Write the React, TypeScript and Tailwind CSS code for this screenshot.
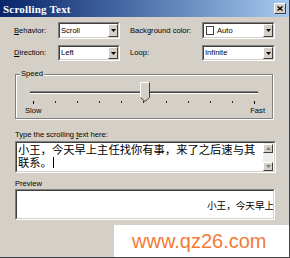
import type { ReactNode } from "react";

const raised =
  "border border-t-white border-l-white border-r-[#404040] border-b-[#404040] bg-[#d4d0c8]";
const sunkenOuter =
  "border border-t-[#808080] border-l-[#808080] border-r-white border-b-white";
const sunkenInner =
  "border border-t-[#404040] border-l-[#404040] border-r-[#d4d0c8] border-b-[#d4d0c8] bg-white";

function Arrow() {
  return (
    <div className={`w-[10px] h-full flex items-center justify-center ${raised}`}>
      <svg width="5" height="3" viewBox="0 0 5 3">
        <path d="M0 0H5L2.5 3Z" fill="#000" />
      </svg>
    </div>
  );
}

function Select({ className, children }: { className: string; children: ReactNode }) {
  return (
    <div className={`${className} ${sunkenOuter}`}>
      <div className={`h-full flex items-stretch ${sunkenInner}`}>
        <div className="flex-1 flex items-center pl-[1px] text-[7.6px] leading-[10px] overflow-hidden whitespace-nowrap">
          {children}
        </div>
        <Arrow />
      </div>
    </div>
  );
}

function ScrollButton({ up }: { up?: boolean }) {
  return (
    <div className={`w-[10px] h-[9px] flex items-center justify-center ${raised}`}>
      <svg width="5" height="3" viewBox="0 0 5 3">
        <path d={up ? "M0 3H5L2.5 0Z" : "M0 0H5L2.5 3Z"} fill="#808080" />
      </svg>
    </div>
  );
}

const ticks = Array.from({ length: 11 }, (_, i) => i);

export default function App() {
  return (
    <div className="w-[290px] h-[258px] bg-[#d4d0c8] relative overflow-hidden border-r border-b border-[#404040] font-['Liberation_Sans',Arial,sans-serif] text-black">
      {/* title bar */}
      <div className="h-[17px] bg-gradient-to-r from-[#0a246a] to-[#a6caf0] flex items-center justify-between pl-[3px] pr-[3px]">
        <span className="font-['Liberation_Serif',serif] font-bold text-[11px] leading-[12px] tracking-[0.2px] text-white">
          Scrolling Text
        </span>
        <div className={`w-[12px] h-[11px] flex items-center justify-center ${raised}`}>
          <svg width="6" height="5" viewBox="0 0 6 5">
            <path d="M0.5 0.5L5.5 4.5M5.5 0.5L0.5 4.5" stroke="#000" strokeWidth="1.3" />
          </svg>
        </div>
      </div>

      <div className="pl-[14px] pr-[13px] pt-[5px]">
        {/* row 1 */}
        <div className="flex items-center">
          <span className="w-[44px] text-[7.6px] leading-[10px]">
            <span className="underline">B</span>ehavior:
          </span>
          <Select className="w-[62px] h-[17px]">Scroll</Select>
          <span className="ml-[10px] w-[72px] text-[7.6px] leading-[10px]">Background color:</span>
          <Select className="w-[73px] h-[17px]">
            <span className="w-[8px] h-[9px] border border-[#404040] bg-white ml-[1px] mr-[3px]" />
            Auto
          </Select>
        </div>

        {/* row 2 */}
        <div className="flex items-center mt-[6px]">
          <span className="w-[44px] text-[7.6px] leading-[10px]">
            <span className="underline">D</span>irection:
          </span>
          <Select className="w-[62px] h-[16px]">Left</Select>
          <span className="ml-[10px] w-[72px] text-[7.6px] leading-[10px]">Loop:</span>
          <Select className="w-[73px] h-[16px]">Infinite</Select>
        </div>

        {/* speed group */}
        <div className="relative mt-[13px] ml-[1px] w-[258px] h-[45px] border border-[#808080] shadow-[inset_1px_1px_0_#fff,1px_1px_0_#fff]">
          <span className="absolute left-[4px] -top-[6px] bg-[#d4d0c8] px-[1px] text-[7.6px] leading-[10px]">
            Speed
          </span>
          <div className="mx-[14px] mt-[16px] relative">
            <div className="h-[3px] border-t border-b border-t-[#808080] border-b-white bg-[#404040]" />
            <svg
              className="absolute left-[110px] -top-[9px]"
              width="10"
              height="20"
              viewBox="0 0 10 20"
            >
              <path d="M0.5 15.5V0.5H9.5V15.5L5 19.5Z" fill="#d4d0c8" />
              <path d="M0.5 15.5V0.5H9" stroke="#fff" fill="none" />
              <path d="M9.5 0.5V15.5L5 19.5L0.5 15.5" stroke="#404040" fill="none" />
            </svg>
            <div className="flex justify-between px-[3px] mt-[7px]">
              {ticks.map((i) => (
                <div
                  key={i}
                  className={i === 0 || i === 10 ? "w-px h-[3px] bg-black" : "w-px h-[2px] bg-[#303030]"}
                />
              ))}
            </div>
          </div>
          <div className="flex justify-between pl-[9px] pr-[7px] mt-[2px] text-[7.6px] leading-[10px]">
            <span>Slow</span>
            <span>Fast</span>
          </div>
        </div>

        {/* text area */}
        <div className="mt-[11px] ml-[1px] text-[7.6px] leading-[10px]">
          Type the scrolling <span className="underline">t</span>ext here:
        </div>
        <div className={`mt-[1px] ml-[1px] w-[261px] h-[32px] ${sunkenOuter}`}>
          <div className={`h-full flex ${sunkenInner}`}>
            <div className="flex-1 pl-[1px] font-['Noto_Sans_CJK_SC','Noto_Sans',sans-serif] text-[11.3px] leading-[13px] whitespace-nowrap">
              <div>小王，今天早上主任找你有事，来了之后速与其</div>
              <div className="flex items-center">
                联系。
                <span className="inline-block w-px h-[11px] bg-black ml-[1px]" />
              </div>
            </div>
            <div className="w-[10px] mr-[1px] pt-[1px] flex flex-col justify-between bg-[#eeece8]">
              <ScrollButton up />
              <ScrollButton />
            </div>
          </div>
        </div>

        {/* preview */}
        <div className="mt-[6px] ml-[1px] text-[7.6px] leading-[10px]">Preview</div>
        <div className={`ml-[1px] w-[260px] h-[31px] ${sunkenOuter}`}>
          <div className={`h-full flex items-center overflow-hidden ${sunkenInner}`}>
            <span className="pl-[190px] font-['Noto_Sans_CJK_SC','Noto_Sans',sans-serif] text-[9.6px] leading-[12px] whitespace-nowrap">
              小王，今天早上主任找你有事，来了之后速与其联系。
            </span>
          </div>
        </div>
      </div>

      {/* watermark */}
      <div className="absolute right-0 bottom-0 w-[175px] h-[32px] bg-white flex items-center pl-[18px]">
        <span className="text-[20px] leading-[22px] text-[#f47a36] font-['Liberation_Sans',Arial,sans-serif]">
          www.qz26.com
        </span>
      </div>
    </div>
  );
}
